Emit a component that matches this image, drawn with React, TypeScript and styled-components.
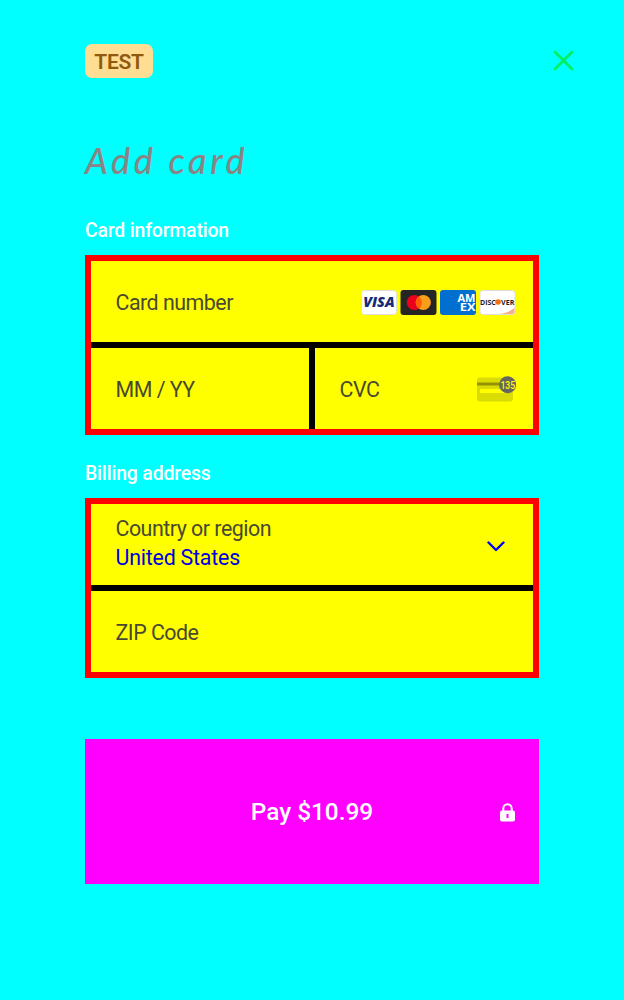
import React from "react";
import styled, { createGlobalStyle } from "styled-components";

const GlobalStyle = createGlobalStyle`
  * { box-sizing: border-box; }
  body { margin: 0; background: #00ffff; font-family: Roboto, sans-serif; }
`;

const Sheet = styled.main`
  min-height: 1000px;
  padding: 44px 85px 0;
  background: #00ffff;
`;

const TopBar = styled.header`
  display: flex;
  justify-content: space-between;
  align-items: center;
  height: 34px;
  margin-right: -35px;
`;

const TestBadge = styled.span`
  width: 68px;
  height: 34px;
  border-radius: 7px;
  background: #ffdd93;
  color: #905a0e;
  font-size: 21px;
  font-weight: 600;
  letter-spacing: -0.3px;
  line-height: 36px;
  text-align: center;
`;

const CloseButton = styled.button`
  display: flex;
  padding: 0 0 2px;
  border: 0;
  background: none;
`;

const Title = styled.h1`
  margin: 59px 0 0;
  height: 46px;
  color: #8a8484;
  font: italic 500 36px/46px Lato, sans-serif;
  letter-spacing: 3.6px;
  white-space: nowrap;
`;

const SectionTitle = styled.h2<{ $top: number }>`
  margin: ${(p) => p.$top}px 0 0;
  height: 24px;
  color: #fff;
  font-size: 19.4px;
  font-weight: 500;
  letter-spacing: -0.16px;
  line-height: 24px;
`;

const Group = styled.div`
  display: flex;
  flex-direction: column;
  gap: 6px;
  height: 180px;
  margin-top: 12px;
  border: 6px solid #ff0000;
  background: #000;
`;

const Row = styled.div`
  display: flex;
  flex: 1;
  gap: 6px;
`;

const Field = styled.div<{ $width?: number; $lift?: number }>`
  display: flex;
  flex: ${(p) => (p.$width ? `0 0 ${p.$width}px` : "1")};
  align-items: center;
  justify-content: space-between;
  padding: 2px 17px ${(p) => p.$lift ?? 0}px 24.5px;
  background: #ffff00;
`;

const Label = styled.span`
  display: block;
  color: #494931;
  font-size: 21.4px;
  letter-spacing: -0.5px;
  line-height: 29px;
  white-space: nowrap;
`;

const Value = styled(Label)`
  color: #0000e0;
  letter-spacing: -0.22px;
`;

const Brands = styled.div`
  display: flex;
  gap: 3px;
`;

const PayButton = styled.button`
  display: grid;
  grid-template-columns: 1fr auto 1fr;
  align-items: center;
  width: 100%;
  height: 145px;
  margin-top: 61px;
  padding: 1px 24px 0;
  border: 0;
  background: #ff00ff;
  color: #fff;
  font: 500 24.4px Roboto, sans-serif;
`;

const PayText = styled.span`
  grid-column: 2;
  padding-bottom: 2px;
`;

const LockIcon = styled.svg`
  justify-self: end;
`;

const VisaName = styled.text`
  font: italic 800 14px "Open Sans", sans-serif;
  fill: #182a78;
`;

const Visa = () => (
  <svg width="36" height="25" viewBox="0 0 36 25">
    <rect x=".5" y=".5" width="35" height="24" rx="3" fill="#fff" stroke="#dedede" />
    <VisaName x="2.2" y="17.4" textLength="31.5" lengthAdjust="spacingAndGlyphs">VISA</VisaName>
  </svg>
);

const Mastercard = () => (
  <svg width="37" height="25" viewBox="0 0 37 25">
    <rect x=".5" width="36" height="25" rx="3" fill="#252525" />
    <circle cx="14.3" cy="12.5" r="7.6" fill="#eb001b" />
    <circle cx="23.3" cy="12.5" r="7.6" fill="#f79e1b" />
    <path d="M18.8 6.4a7.6 7.6 0 0 1 0 12.2 7.6 7.6 0 0 1 0-12.2Z" fill="#ff5f00" />
  </svg>
);

const AmexName = styled.text`
  font: 700 11px "Open Sans", sans-serif;
  fill: #fff;
`;

const Amex = () => (
  <svg width="36" height="25" viewBox="0 0 36 25">
    <rect width="36" height="25" rx="3" fill="#016fd0" />
    <AmexName x="17.4" y="12" textLength="18" lengthAdjust="spacingAndGlyphs">AM</AmexName>
    <AmexName x="19.8" y="20.9" textLength="15.8" lengthAdjust="spacingAndGlyphs">EX</AmexName>
  </svg>
);

const DiscoverName = styled.text`
  font: 700 7.4px "Open Sans", sans-serif;
  fill: #1d1d1d;
`;

const Discover = () => (
  <svg width="37" height="25" viewBox="0 0 37 25">
    <path d="M4 .5h29a3 3 0 0 1 3 3v18a3 3 0 0 1-3 3H4a3 3 0 0 1-3-3v-18a3 3 0 0 1 3-3Z" fill="#fff" stroke="#dedede" />
    <path d="M21 24c6-1 11-3 14.5-6v3.5c0 1.5-1 2.5-2.5 2.5Z" fill="#f9ae83" />
    <DiscoverName x="1" y="14.7" textLength="15.8" lengthAdjust="spacingAndGlyphs">DISC</DiscoverName>
    <circle cx="19" cy="12" r="2.8" fill="#f47216" />
    <DiscoverName x="22" y="14.7" textLength="13.4" lengthAdjust="spacingAndGlyphs">VER</DiscoverName>
  </svg>
);

const CvcNumber = styled.text`
  font: 500 11.5px Roboto, sans-serif;
  fill: #ffff00;
`;

const CvcCard = () => (
  <svg width="39" height="27" viewBox="0 0 39 27">
    <rect y="1.5" width="36" height="24" rx="3" fill="#dbdb05" />
    <path d="M0 6.5h24v3H0Z" fill="#929204" />
    <rect x="3" y="13" width="25" height="4" rx="1" fill="#ffff00" />
    <circle cx="30.6" cy="8.8" r="8.5" fill="#66665f" />
    <CvcNumber x="23.4" y="12.8" textLength="14.8" lengthAdjust="spacingAndGlyphs">135</CvcNumber>
  </svg>
);

const Chevron = styled.svg`
  margin: 8px 11px 0 0;
`;

export default function App() {
  return (
    <>
      <GlobalStyle />
      <Sheet>
        <TopBar>
          <TestBadge>TEST</TestBadge>
          <CloseButton aria-label="Close">
            <svg width="22" height="22" viewBox="0 0 22 22" fill="none" stroke="#00ef62" strokeWidth="2.9" strokeLinecap="round">
              <path d="m3 3 17 17M20 3 3 20" />
            </svg>
          </CloseButton>
        </TopBar>
        <Title>Add card</Title>
        <SectionTitle $top={36}>Card information</SectionTitle>
        <Group>
          <Row>
            <Field>
              <Label>Card number</Label>
              <Brands>
                <Visa />
                <Mastercard />
                <Amex />
                <Discover />
              </Brands>
            </Field>
          </Row>
          <Row>
            <Field $width={218}>
              <Label>MM / YY</Label>
            </Field>
            <Field>
              <Label>CVC</Label>
              <CvcCard />
            </Field>
          </Row>
        </Group>
        <SectionTitle $top={27}>Billing address</SectionTitle>
        <Group>
          <Row>
            <Field $lift={6}>
              <div>
                <Label>Country or region</Label>
                <Value>United States</Value>
              </div>
              <Chevron width="18" height="11" viewBox="0 0 18 11" fill="none" stroke="#0000ff" strokeWidth="2.4" strokeLinecap="round" strokeLinejoin="round">
                <path d="m1.5 1.5 7.5 7.5 7.5-7.5" />
              </Chevron>
            </Field>
          </Row>
          <Row>
            <Field>
              <Label>ZIP Code</Label>
            </Field>
          </Row>
        </Group>
        <PayButton>
          <PayText>Pay $10.99</PayText>
          <LockIcon width="15" height="19" viewBox="0 0 15 19">
            <path d="M3.3 9V5.4a4.2 4.2 0 0 1 8.4 0V9" fill="none" stroke="#fff" strokeWidth="2" />
            <rect y="7.5" width="15" height="11" rx="2" fill="#fff" />
            <path d="M6.5 11h2v4h-2Z" fill="#ff00ff" />
          </LockIcon>
        </PayButton>
      </Sheet>
    </>
  );
}
